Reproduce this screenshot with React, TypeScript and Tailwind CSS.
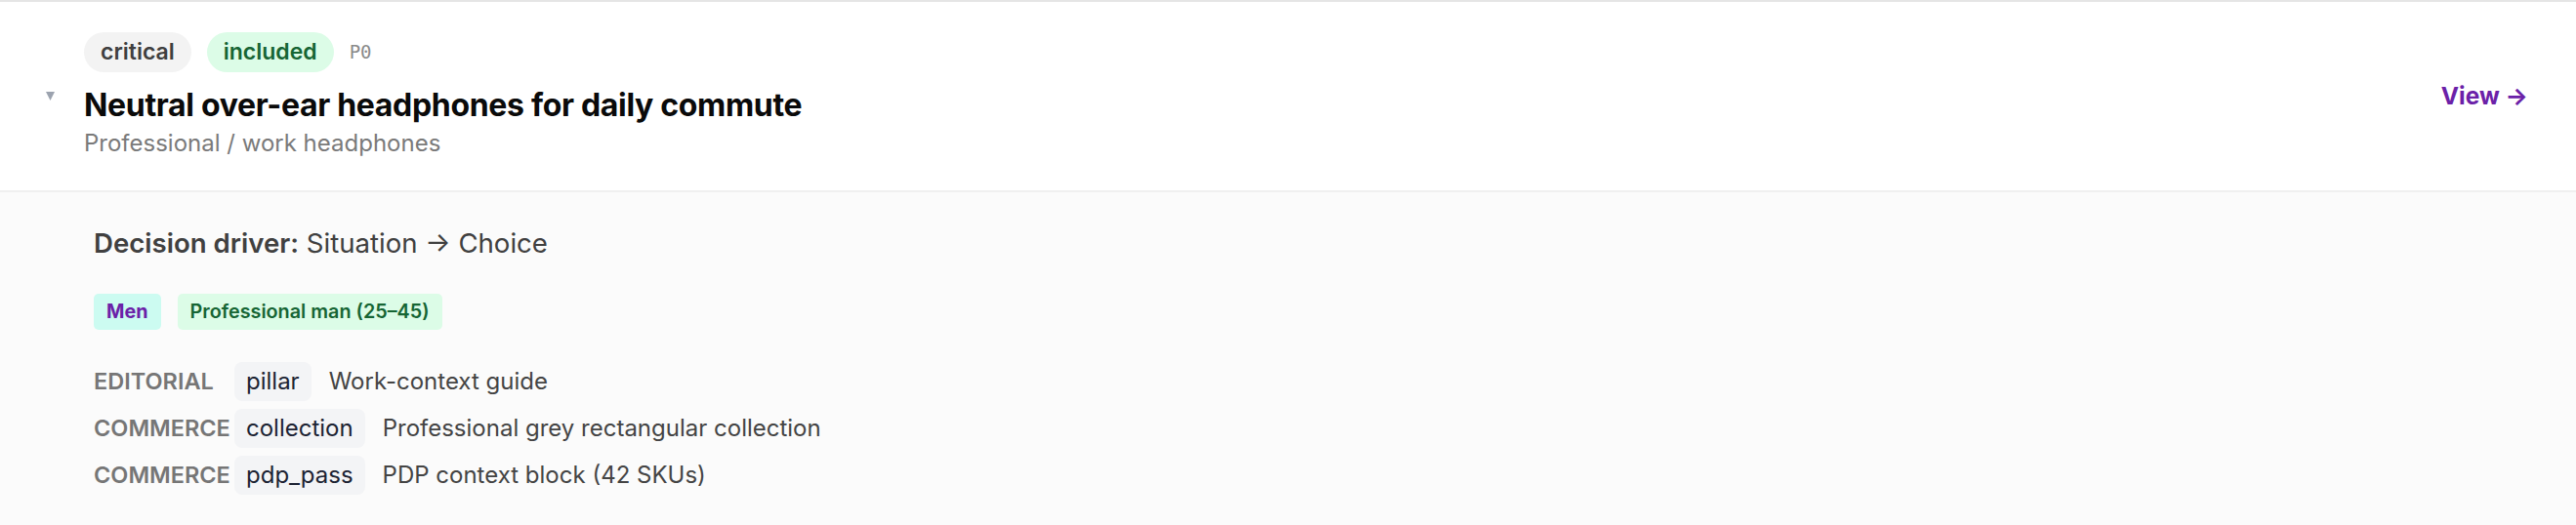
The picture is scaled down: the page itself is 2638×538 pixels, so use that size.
import React from "react";

type Placement = {
  channel: string;
  kind: string;
  label: string;
};

const placements: Placement[] = [
  { channel: "EDITORIAL", kind: "pillar", label: "Work-context guide" },
  { channel: "COMMERCE", kind: "collection", label: "Professional grey rectangular collection" },
  { channel: "COMMERCE", kind: "pdp_pass", label: "PDP context block (42 SKUs)" },
];

function Caret() {
  return (
    <svg width="9" height="9" viewBox="0 0 9 9" className="block">
      <polygon points="0,0 9,0 4.5,9" fill="#9ca3af" />
    </svg>
  );
}

function StatusPill({ children, className }: { children: React.ReactNode; className: string }) {
  return (
    <span className={`inline-flex h-[41px] items-center rounded-full px-[17px] text-[23px] font-semibold ${className}`}>
      {children}
    </span>
  );
}

function AudienceTag({ children, className }: { children: React.ReactNode; className: string }) {
  return (
    <span className={`inline-flex h-[37px] items-center rounded-[5px] px-[13px] text-[19.8px] ${className}`}>
      {children}
    </span>
  );
}

export default function App() {
  return (
    <div
      className="min-h-screen bg-[#fbfbfb] text-[#111]"
      style={{ fontFamily: "Inter, 'Noto Sans', sans-serif" }}
    >
      <div className="border-t-2 border-[#e5e5e5]">
        {/* Row header */}
        <div className="flex items-center justify-between border-b-2 border-[#f0f0f0] bg-white pb-[32px] pl-[47px] pr-[49px] pt-[31px]">
          <div className="flex gap-[30px]">
            <div className="pt-[61px]">
              <Caret />
            </div>
            <div className="flex flex-col">
              <div className="flex items-center gap-[16px]">
                <StatusPill className="bg-[#f3f3f3] text-[#3f3f3f]">critical</StatusPill>
                <StatusPill className="bg-[#dcfce7] text-[#166534]">included</StatusPill>
                <span
                  className="text-[19px] text-[#8a8a8a]"
                  style={{ fontFamily: "'DejaVu Sans Mono', 'Liberation Mono', monospace" }}
                >
                  P0
                </span>
              </div>
              <h2 className="mt-[15px] text-[32px] font-bold leading-[38px] tracking-[-0.01em] text-[#0a0a0a]">
                Neutral over-ear headphones for daily commute
              </h2>
              <p className="mt-[3px] text-[24px] leading-[33px] text-[#7a7a7a]">Professional / work headphones</p>
            </div>
          </div>
          <a className="text-[24.5px] font-bold text-[#6b21a8]">View →</a>
        </div>

        {/* Expanded details */}
        <div className="bg-[#fbfbfb] pb-[32px] pl-[96px] pt-[32px]">
          <p className="text-[27.6px] leading-[41px] text-[#404040]">
            <span className="font-semibold">Decision driver:</span> Situation → Choice
          </p>

          <div className="mt-[31px] flex gap-[17px]">
            <AudienceTag className="bg-[#ccfbf1] font-bold text-[#6b21a8]">Men</AudienceTag>
            <AudienceTag className="bg-[#dcfce7] font-semibold text-[#166534]">Professional man (25–45)</AudienceTag>
          </div>

          <div className="mt-[33px] flex flex-col gap-[8px]">
            {placements.map((p) => (
              <div key={p.kind} className="flex items-center">
                <span className="w-[144px] shrink-0 text-[23.5px] font-semibold text-[#767676]">{p.channel}</span>
                <span className="inline-flex h-[40px] items-center rounded-[8px] bg-[#f3f4f6] px-[12px] text-[24px] text-[#1c2333]">
                  {p.kind}
                </span>
                <span className="ml-[18px] text-[24px] text-[#444]">{p.label}</span>
              </div>
            ))}
          </div>
        </div>
      </div>
    </div>
  );
}
